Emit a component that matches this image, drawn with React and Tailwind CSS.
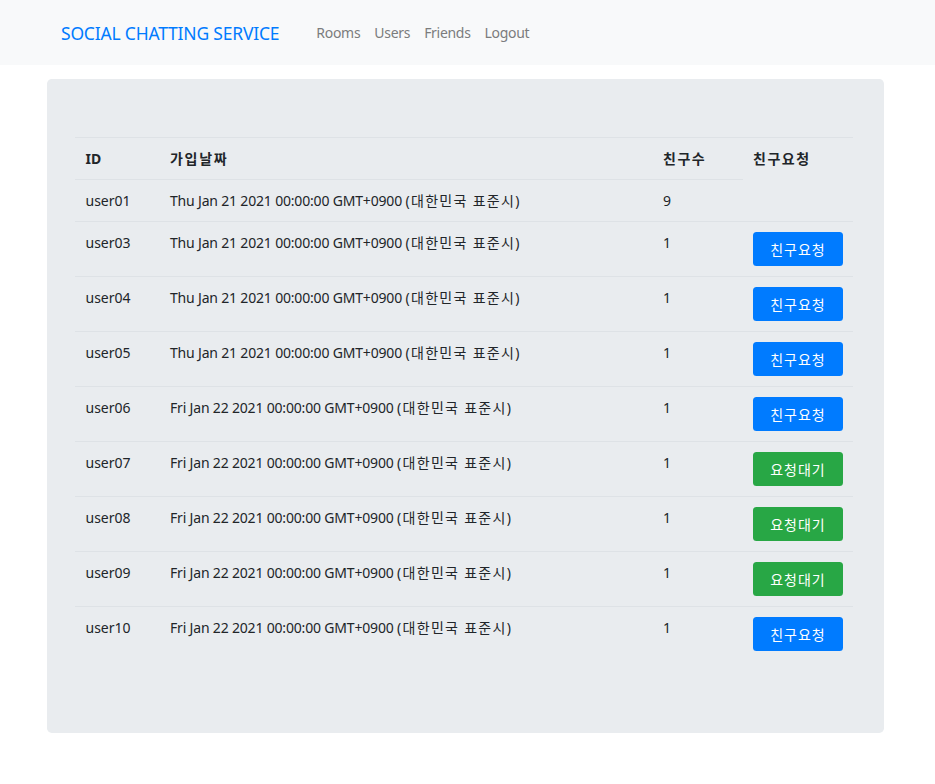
import React from "react";

const rows = [
  { id: "user01", d: "Thu Jan 21 2021 00:00:00 GMT+0900", n: "9", btn: null },
  { id: "user03", d: "Thu Jan 21 2021 00:00:00 GMT+0900", n: "1", btn: "req" },
  { id: "user04", d: "Thu Jan 21 2021 00:00:00 GMT+0900", n: "1", btn: "req" },
  { id: "user05", d: "Thu Jan 21 2021 00:00:00 GMT+0900", n: "1", btn: "req" },
  { id: "user06", d: "Fri Jan 22 2021 00:00:00 GMT+0900", n: "1", btn: "req" },
  { id: "user07", d: "Fri Jan 22 2021 00:00:00 GMT+0900", n: "1", btn: "wait" },
  { id: "user08", d: "Fri Jan 22 2021 00:00:00 GMT+0900", n: "1", btn: "wait" },
  { id: "user09", d: "Fri Jan 22 2021 00:00:00 GMT+0900", n: "1", btn: "wait" },
  { id: "user10", d: "Fri Jan 22 2021 00:00:00 GMT+0900", n: "1", btn: "req" },
];

const td = "align-top px-[10.5px] py-[10px] border-t border-[#dee2e6]";

function Btn({ kind }) {
  const cls =
    "w-[90px] h-[34px] rounded-[3.5px] text-white text-[14px] leading-[21px] tracking-[1px] " +
    (kind === "req" ? "bg-[#007bff]" : "bg-[#28a745]");
  return <button className={cls}>{kind === "req" ? "친구요청" : "요청대기"}</button>;
}

export default function App() {
  return (
    <div
      className="min-h-[784px] bg-white text-[#212529] text-[14px] leading-[21px]"
      style={{ fontFamily: '"Noto Sans", "Noto Sans CJK KR", sans-serif' }}
    >
      <nav className="h-[65px] bg-[#f8f9fa]">
        <div className="ml-[61px] h-full flex items-center">
          <span className="text-[17.5px] text-[#007bff] leading-[26px] mr-[30px] tracking-[-0.2px]">
            SOCIAL CHATTING SERVICE
          </span>
          <div className="flex text-[#7b7c7d] tracking-[-0.3px]">
            <span className="px-[7px]">Rooms</span>
            <span className="px-[7px]">Users</span>
            <span className="px-[7px]">Friends</span>
            <span className="px-[7px]">Logout</span>
          </div>
        </div>
      </nav>
      <div className="mt-[14px] mx-[47px] w-[837px] bg-[#e9ecef] rounded-[4.8px] px-[28px] pt-[58px] pb-[58px]">
        <table className="w-[778px] table-fixed border-collapse mb-[14px] text-left">
          <colgroup>
            <col className="w-[84.5px]" />
            <col className="w-[493px]" />
            <col className="w-[90px]" />
            <col className="w-[110.5px]" />
          </colgroup>
          <tbody>
            <tr>
              <th className={td + " font-bold"}>ID</th>
              <th className={td + " font-bold tracking-[1.7px]"}>가입날짜</th>
              <th className={td + " font-bold tracking-[1.5px]"}>친구수</th>
              <th rowSpan={2} className={td + " font-bold tracking-[1.5px]"}>
                친구요청
              </th>
            </tr>
            {rows.map((r, i) => (
              <tr key={r.id}>
                <td className={td}>{r.id}</td>
                <td className={td + " whitespace-nowrap"}>
                  <span className="tracking-[-0.18px]">{r.d} </span>
                  <span className="tracking-[1.3px]">(대한민국 표준시)</span>
                </td>
                <td className={td}>{r.n}</td>
                {i === 0 ? null : (
                  <td className={td}>
                    <Btn kind={r.btn} />
                  </td>
                )}
              </tr>
            ))}
          </tbody>
        </table>
      </div>
    </div>
  );
}
